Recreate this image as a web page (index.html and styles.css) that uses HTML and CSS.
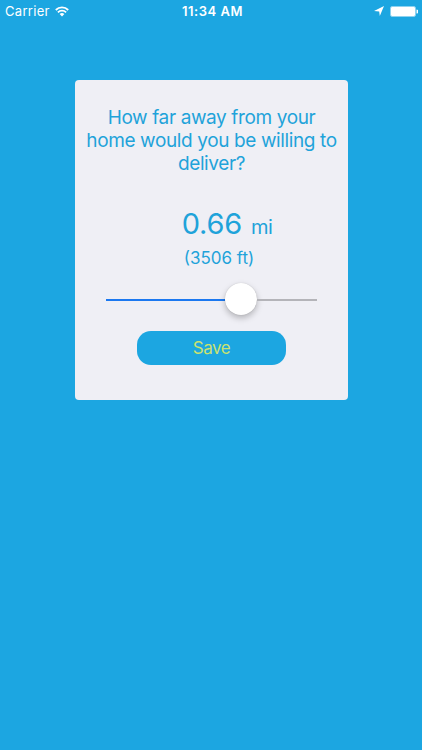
FILE: index.html
```html
<!DOCTYPE html>
<html lang="en">
<head>
    <meta charset="UTF-8">
    <meta name="viewport" content="width=device-width, initial-scale=1.0">
    <title>Delivery Distance</title>
    <link rel="stylesheet" href="styles.css">
</head>
<body>
    <header class="status-bar">
        <div class="status-left">
            <span class="carrier">Carrier</span>
            <svg class="wifi" viewBox="0 0 14 11" width="14" height="11">
                <path d="M.8 4a8.8 8.8 0 0 1 12.4 0M2.9 6.3a5.8 5.8 0 0 1 8.2 0" fill="none" stroke="#fff" stroke-width="1.8"/>
                <path d="M7 10.6 4.6 8.1a3.4 3.4 0 0 1 4.8 0z" fill="#fff"/>
            </svg>
        </div>
        <div class="time">11:34 AM</div>
        <div class="status-right">
            <svg class="location" viewBox="0 0 10 10" width="10" height="10">
                <path d="M10 0 5.8 10 5.2 5.4 0 5z" fill="#fff"/>
            </svg>
            <svg class="battery" viewBox="0 0 28 11" width="28" height="11">
                <rect x="0.5" y="0.5" width="25" height="10" rx="1.5" fill="none" stroke="#fff" stroke-width="0.5"/>
                <rect x="1" y="1" width="24" height="9" rx="1" fill="#fff"/>
                <path d="M26.5 3.5a2 2 0 0 1 0 4z" fill="#fff"/>
            </svg>
        </div>
    </header>
    <main class="card">
        <h1 class="question"><span class="line">How far away from your</span><span class="line">home would you be willing to</span><span class="line">deliver?</span></h1>
        <div class="distance"><span class="value">0.66</span><span class="unit">mi</span></div>
        <div class="feet">(3506 ft)</div>
        <div class="slider">
            <div class="track-filled"></div>
            <div class="thumb"></div>
            <div class="track-empty"></div>
        </div>
        <button type="button" class="save-btn">Save</button>
    </main>
</body>
</html>
```
FILE: styles.css
```css
* {
    box-sizing: border-box;
}

body {
    margin: 0;
    height: 100vh;
    background: #1ca6e1;
    font-family: Inter, 'Liberation Sans', sans-serif;
    color: #1fa3da;
    overflow: hidden;
}

.status-bar {
    display: grid;
    grid-template-columns: 1fr auto 1fr;
    align-items: center;
    height: 22px;
    padding: 0 4px 0 5px;
    color: #fff;
    font-size: 13px;
}

.status-left,
.status-right {
    display: flex;
    align-items: center;
}

.status-left {
    gap: 5px;
}

.carrier {
    letter-spacing: 0.3px;
}

.time {
    padding-left: 2px;
    font-weight: 600;
    letter-spacing: 0.5px;
}

.status-right {
    justify-content: flex-end;
    gap: 6px;
}

.card {
    display: flex;
    flex-direction: column;
    align-items: center;
    width: 273px;
    height: 320px;
    margin: 58px 0 0 75px;
    padding-top: 26px;
    background: #efeff5;
    border-radius: 4px;
}

.question {
    margin: 0;
    font-size: 19px;
    font-weight: 400;
    line-height: 23px;
    letter-spacing: -0.38px;
    text-align: center;
}

.line {
    display: block;
    white-space: nowrap;
}

.distance {
    display: flex;
    align-items: baseline;
    gap: 9px;
    margin: 31px 0 0 31px;
    line-height: 36px;
}

.value {
    font-size: 29px;
    letter-spacing: -0.2px;
}

.unit {
    font-size: 20px;
    letter-spacing: -0.5px;
}

.feet {
    margin: 3px 0 0 15px;
    font-size: 17px;
    line-height: 20px;
}

.slider {
    display: flex;
    align-items: center;
    width: 211px;
    height: 32px;
    margin-top: 15px;
}

.track-filled,
.track-empty {
    height: 2px;
    margin-top: 2px;
}

.track-filled {
    width: 119px;
    background: #1b78f0;
}

.track-empty {
    flex: 1;
    background: #b4b4b9;
}

.thumb {
    width: 32px;
    height: 32px;
    border-radius: 50%;
    background: #fff;
    box-shadow: 0 3px 6px rgba(0, 0, 0, 0.25), 0 0 1px rgba(0, 0, 0, 0.2);
}

.save-btn {
    width: 149px;
    height: 34px;
    margin-top: 16px;
    padding: 0;
    border: none;
    border-radius: 14px;
    background: #1ca6e1;
    color: #c9e270;
    font-family: inherit;
    font-size: 17px;
    letter-spacing: -0.4px;
}
```
